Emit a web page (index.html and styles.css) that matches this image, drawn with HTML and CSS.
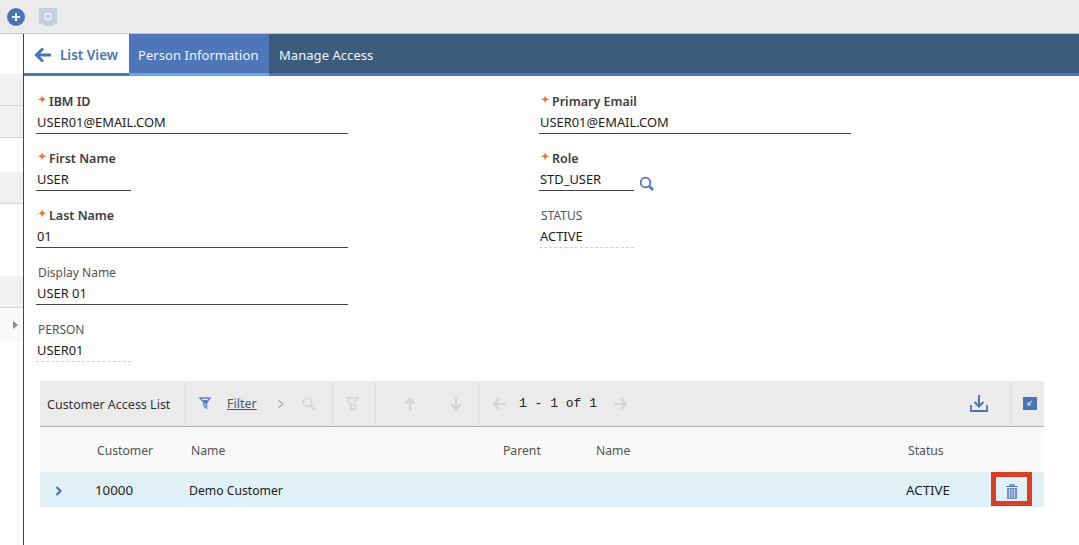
FILE: index.html
```html
<!DOCTYPE html>
<html lang="en">
<head>
    <meta charset="UTF-8">
    <title>Person Information</title>
    <link rel="stylesheet" href="styles.css">
</head>
<body>
    <div class="topbar">
        <svg class="add-icon" width="18" height="18" viewBox="0 0 18 18">
            <circle cx="9" cy="9" r="9" fill="#4a74b8"/>
            <path d="M9 5v8M5 9h8" stroke="#fff" stroke-width="2"/>
        </svg>
        <svg class="save-icon" width="18" height="18" viewBox="0 0 18 18">
            <path d="M0 0h18v16h-3l-1 2H5l-1-2H0z" fill="#c3cfe2"/>
            <circle cx="9" cy="8.500" r="4" fill="#e6e9ee"/>
            <circle cx="9" cy="8.500" r="1.800" fill="#b5c3da"/>
        </svg>
    </div>

    <div class="main">
        <div class="sidebar">
            <div class="side-row side-tall"></div>
            <div class="side-row side-grey"></div>
            <div class="side-row side-grey"></div>
            <div class="side-row side-mid"></div>
            <div class="side-row side-grey"></div>
            <div class="side-row side-big"></div>
            <div class="side-row side-grey"></div>
            <div class="side-row side-arrow"><span class="arrow-right"></span></div>
        </div>

        <div class="content">
            <div class="tabs">
                <a class="tab tab-back">
                    <svg width="18" height="16" viewBox="0 0 18 16">
                        <path d="M17 8H3M9 1.500 2.500 8 9 14.500" fill="none" stroke="#4a74b8" stroke-width="3"/>
                    </svg>
                    List View
                </a>
                <a class="tab tab-active">Person Information</a>
                <a class="tab tab-plain">Manage Access</a>
            </div>

            <div class="form">
                <div class="form-col">
                    <div class="field">
                        <label class="req">IBM ID</label>
                        <div class="value w-long">USER01@EMAIL.COM</div>
                    </div>
                    <div class="field">
                        <label class="req">First Name</label>
                        <div class="value w-short">USER</div>
                    </div>
                    <div class="field">
                        <label class="req">Last Name</label>
                        <div class="value w-long">01</div>
                    </div>
                    <div class="field">
                        <label>Display Name</label>
                        <div class="value w-long">USER 01</div>
                    </div>
                    <div class="field">
                        <label>PERSON</label>
                        <div class="value w-short readonly">USER01</div>
                    </div>
                </div>
                <div class="form-col">
                    <div class="field">
                        <label class="req">Primary Email</label>
                        <div class="value w-long">USER01@EMAIL.COM</div>
                    </div>
                    <div class="field">
                        <label class="req">Role</label>
                        <div class="value-line">
                            <div class="value w-short">STD_USER</div>
                            <svg class="lookup" width="16" height="16" viewBox="0 0 16 16">
                                <circle cx="6.500" cy="6.500" r="4.800" fill="none" stroke="#4a74b8" stroke-width="1.700"/>
                                <path d="M10.500 10.500l3.500 3.500" stroke="#4a74b8" stroke-width="2.600"/>
                            </svg>
                        </div>
                    </div>
                    <div class="field">
                        <label>STATUS</label>
                        <div class="value w-short readonly">ACTIVE</div>
                    </div>
                </div>
            </div>

            <div class="table">
                <div class="toolbar">
                    <div class="tb-title">Customer Access List</div>
                    <div class="tb-group tb-filter">
                        <svg width="14" height="13" viewBox="0 0 14 13">
                            <path d="M2 1h10L8.500 6v5L6 9V6z" fill="none" stroke="#5d83c0" stroke-width="1.400"/>
                            <path d="M5 3h4.500L7.500 7.500z" fill="#4a74b8"/>
                        </svg>
                        <a class="filter-link">Filter</a>
                        <svg class="chevron" width="8" height="10" viewBox="0 0 8 10">
                            <path d="M1.500 1.500 6 5 1.500 8.500" fill="none" stroke="#a8a8a8" stroke-width="1.400"/>
                        </svg>
                        <svg class="filter-search" width="14" height="14" viewBox="0 0 14 14">
                            <circle cx="5.500" cy="5.500" r="4.300" fill="none" stroke="#d6d6d6" stroke-width="1.500"/>
                            <path d="M9 9l4 4" stroke="#d6d6d6" stroke-width="2.200"/>
                        </svg>
                    </div>
                    <div class="tb-group tb-clear">
                        <svg width="14" height="14" viewBox="0 0 14 14">
                            <path d="M1 1h12L9 6M5.500 8 2.500 3" fill="none" stroke="#d2d2d2" stroke-width="1.400"/>
                            <circle cx="8" cy="10" r="2.500" fill="none" stroke="#d2d2d2" stroke-width="1.400"/>
                        </svg>
                    </div>
                    <div class="tb-group tb-sort">
                        <svg width="14" height="14" viewBox="0 0 14 14">
                            <path d="M7 13.500V2M2 7l5-5 5 5" fill="none" stroke="#d4d4d4" stroke-width="2"/>
                        </svg>
                        <svg width="14" height="14" viewBox="0 0 14 14">
                            <path d="M7 .5V12M2 7l5 5 5-5" fill="none" stroke="#d4d4d4" stroke-width="2"/>
                        </svg>
                    </div>
                    <div class="tb-group tb-pages">
                        <svg width="14" height="14" viewBox="0 0 14 14">
                            <path d="M13.500 7H2M7 2 2 7l5 5" fill="none" stroke="#d4d4d4" stroke-width="2"/>
                        </svg>
                        <span class="page-count">1 - 1 of 1</span>
                        <svg width="14" height="14" viewBox="0 0 14 14">
                            <path d="M.5 7H12M7 2l5 5-5 5" fill="none" stroke="#d4d4d4" stroke-width="2"/>
                        </svg>
                        <svg class="download" width="18" height="17" viewBox="0 0 18 17">
                            <path d="M1 10v6h16v-6" fill="none" stroke="#4a74b8" stroke-width="1.800"/>
                            <path d="M9 0v11M4.500 7 9 11.500 13.500 7" fill="none" stroke="#4a74b8" stroke-width="2"/>
                        </svg>
                    </div>
                    <div class="tb-group tb-expand">
                        <svg width="14" height="13" viewBox="0 0 14 13">
                            <rect width="14" height="13" fill="#4a74b8"/>
                            <path d="M9 4 5.500 7.500M5 5v3h3" fill="none" stroke="#c9d7ec" stroke-width="1.200"/>
                        </svg>
                    </div>
                </div>

                <div class="grid-row grid-head">
                    <div class="c-toggle"></div>
                    <div class="c-cust">Customer</div>
                    <div class="c-name">Name</div>
                    <div class="c-parent">Parent</div>
                    <div class="c-pname">Name</div>
                    <div class="c-status">Status</div>
                </div>
                <div class="grid-row grid-data">
                    <div class="c-toggle">
                        <svg width="8" height="10" viewBox="0 0 8 10">
                            <path d="M1.500 1 5.500 5l-4 4" fill="none" stroke="#4a74b8" stroke-width="2.200"/>
                        </svg>
                    </div>
                    <div class="c-cust">10000</div>
                    <div class="c-name">Demo Customer</div>
                    <div class="c-parent"></div>
                    <div class="c-pname"></div>
                    <div class="c-status">ACTIVE</div>
                    <div class="c-delete">
                        <svg width="12" height="15" viewBox="0 0 12 15">
                            <path d="M0 2.500h12M4 2V.8h4V2" fill="none" stroke="#4a74b8" stroke-width="1.200"/>
                            <path d="M1 4h10v11H1z" fill="#6f93c9"/>
                            <path d="M3.500 5v9M6 5v9M8.500 5v9" stroke="#dfeaf3" stroke-width=".8"/>
                        </svg>
                    </div>
                </div>
            </div>
        </div>
    </div>
</body>
</html>
```

FILE: styles.css
```css
html, body {
    height: 100%;
}

body {
    margin: 0;
    padding: 0;
    background: white;
    font-family: "Noto Sans", Arial, sans-serif;
    font-size: 12px;
    color: #222;
    overflow: hidden;
    display: flex;
    flex-direction: column;
}

/* Top bar */
.topbar {
    height: 33px;
    background: #ebebeb;
    border-bottom: 1px solid #c6c6c6;
    display: flex;
    align-items: center;
    padding-left: 7px;
    gap: 14px;
}

.main {
    flex-grow: 1;
    display: flex;
}

/* Left rail */
.sidebar {
    width: 23px;
    border-right: 1px solid #3c4450;
    flex-shrink: 0;
}

.side-row {
    box-sizing: border-box;
}

.side-tall {
    height: 40px;
}

.side-grey {
    height: 32px;
    background: #f1f1f1;
    border-bottom: 1px solid #d6d6d6;
}

.side-mid {
    height: 34px;
}

.side-big {
    height: 72px;
}

.side-arrow {
    height: 34px;
    background: #f9f9f9;
    display: flex;
    align-items: center;
    padding-left: 13px;
}

.arrow-right {
    border-left: 5px solid #8a8a8a;
    border-top: 4px solid transparent;
    border-bottom: 4px solid transparent;
}

.content {
    flex-grow: 1;
    min-width: 0;
}

/* Tabs */
.tabs {
    display: flex;
    height: 39px;
    background: #3c5c7e;
    border-bottom: 3px solid #4d76b8;
}

.tab {
    height: 42px;
    box-sizing: border-box;
    padding: 3px 9px 0;
    display: flex;
    align-items: center;
    color: #f2f5f9;
    font-size: 13px;
    letter-spacing: 0.05px;
    border-bottom: 3px solid #4d76b8;
}

.tab-back {
    width: 105px;
    padding-left: 10px;
    background: white;
    color: #4a74b8;
    font-weight: 600;
    font-size: 13.500px;
    letter-spacing: 0;
    gap: 8px;
}

.tab-active {
    width: 140px;
    background: #4e76b9;
    border-bottom-color: #6aa5ee;
}

.tab-plain {
    padding-left: 10px;
}

/* Form */
.form {
    display: flex;
    padding: 15px 0 0 12px;
    height: 305px;
    box-sizing: border-box;
}

.form-col:first-child {
    width: 503px;
}

.field {
    height: 57px;
    color: #4a4a4a;
}

.field label {
    display: block;
    height: 22px;
    line-height: 22px;
    padding-left: 2px;
    color: #525252;
}

.field label.req {
    font-size: 12.500px;
    line-height: 22px;
    font-weight: 600;
    color: #3d3d3d;
}

.field label.req::before {
    content: "✦";
    display: inline-block;
    width: 11px;
    line-height: 10px;
    color: #e8762d;
    font-size: 10px;
    vertical-align: 3px;
}

.value {
    height: 20px;
    line-height: 19px;
    font-size: 12.900px;
    padding-left: 1px;
    border-bottom: 1px solid #444;
    color: #1c1c1c;
}

.value.readonly {
    border-bottom: 1px dashed #d0d0d0;
}

.w-long {
    width: 311px;
}

.w-short {
    width: 94px;
}

.value-line {
    display: flex;
    align-items: flex-start;
    gap: 5px;
}

.lookup {
    margin-top: 6px;
}

/* Table */
.table {
    margin: 0 35px 0 16px;
}

.toolbar {
    height: 45px;
    display: flex;
    background: #ebebeb;
    border-bottom: 1px solid #b0b0b0;
}

.tb-title {
    width: 145px;
    padding-left: 7px;
    box-sizing: border-box;
    font-size: 12.500px;
    line-height: 47px;
    color: #333;
}

.tb-group {
    display: flex;
    align-items: center;
    border-left: 1px solid #dcdcdc;
    box-sizing: border-box;
}

.tb-filter {
    width: 147px;
    padding-left: 12px;
}

.filter-link {
    font-size: 12.500px;
    color: #3c5c7e;
    text-decoration: underline;
    margin: 0 20px 0 15px;
}

.filter-search {
    margin-left: 17px;
}

.tb-clear {
    width: 43px;
    padding-left: 12px;
}

.tb-sort {
    width: 103px;
    padding-left: 27px;
    gap: 32px;
}

.tb-pages {
    flex-grow: 1;
    padding: 0 22px 0 13px;
}

.page-count {
    font-family: "Liberation Mono", monospace;
    font-size: 13px;
    color: #222;
    margin: 0 17px 0 13px;
}

.download {
    margin-left: auto;
}

.tb-expand {
    width: 34px;
    padding-left: 12px;
}

.grid-row {
    display: flex;
    align-items: center;
    position: relative;
}

.grid-head {
    height: 45px;
    background: #f9f9f9;
    color: #525252;
    padding-top: 1px;
    box-sizing: border-box;
    font-size: 12.200px;
}

.grid-head .c-cust,
.grid-head .c-name,
.grid-head .c-parent,
.grid-head .c-pname,
.grid-head .c-status {
    padding-left: 2px;
}

.grid-data {
    height: 35px;
    background: #dff0f7;
    color: #1c1c1c;
    font-size: 12.200px;
    padding-top: 1px;
    box-sizing: border-box;
}

.grid-data .c-cust,
.grid-data .c-status {
    font-size: 13.300px;
}

.c-toggle {
    width: 55px;
    padding-left: 15px;
    box-sizing: border-box;
    display: flex;
    align-items: center;
    padding-top: 2px;
}

.c-cust,
.c-name,
.c-parent,
.c-pname,
.c-status {
    box-sizing: border-box;
}

.c-cust {
    width: 94px;
}

.c-name {
    width: 312px;
}

.c-parent {
    width: 93px;
}

.c-pname {
    width: 312px;
}

.c-status {
    width: 85px;
}

/* Red highlight box around the delete action */
.c-delete {
    position: absolute;
    left: 951px;
    top: 0;
    width: 41px;
    height: 34px;
    box-sizing: border-box;
    border: 5px solid #e03c22;
    display: flex;
    align-items: center;
    justify-content: center;
    padding-top: 5px;
}
```
